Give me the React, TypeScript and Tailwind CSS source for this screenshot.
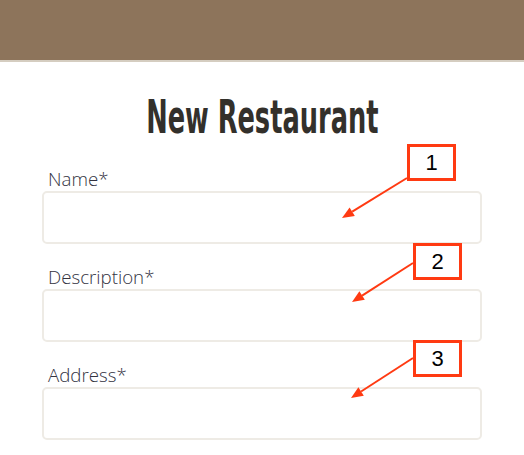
const fields = [
  { label: "Name*", num: "1" },
  { label: "Description*", num: "2" },
  { label: "Address*", num: "3" },
];

// callout boxes + arrows drawn over the form
const callouts = [
  { num: "1", box: "left-[407px] top-[144px]", x1: 407, y1: 178, x2: 342, y2: 218 },
  { num: "2", box: "left-[413px] top-[243px]", x1: 413, y1: 263, x2: 352, y2: 302 },
  { num: "3", box: "left-[413px] top-[340px]", x1: 413, y1: 358, x2: 351, y2: 398 },
];

function Arrow({ x1, y1, x2, y2 }: { x1: number; y1: number; x2: number; y2: number }) {
  const ang = Math.atan2(y2 - y1, x2 - x1);
  const len = 12;
  const w = 5;
  const bx = x2 - len * Math.cos(ang);
  const by = y2 - len * Math.sin(ang);
  const px = -Math.sin(ang) * w;
  const py = Math.cos(ang) * w;
  return (
    <g>
      <line x1={x1} y1={y1} x2={bx} y2={by} stroke="#ff3a12" strokeWidth="2" />
      <polygon points={`${x2},${y2} ${bx + px},${by + py} ${bx - px},${by - py}`} fill="#ff3a12" />
    </g>
  );
}

export default function App() {
  return (
    <div className="relative h-[455px] w-[524px] overflow-hidden bg-white">
      <header className="h-[62px] border-b-2 border-[#d5cdc0] bg-[#8d745b]" />

      <main className="px-[42px]">
        <h1 className="mt-[28px] flex h-[54px] justify-center">
          <span className="inline-block origin-center scale-x-[0.62] whitespace-nowrap text-[46px] leading-[54px] font-bold text-[#33302b] [font-family:'DejaVu_Sans_Condensed','DejaVu_Sans',sans-serif]">
            New Restaurant
          </span>
        </h1>

        <form className="mt-[24px] flex flex-col gap-[22px]">
          {fields.map((f) => (
            <div key={f.num} className="flex flex-col">
              <label className="pl-[6px] text-[18.7px] leading-[22px] font-light text-[#33333f] [font-family:'Open_Sans',sans-serif]">
                {f.label}
              </label>
              <input
                type="text"
                className="mt-px h-[53px] w-full rounded-[5px] border-2 border-[#eeebe5] bg-white outline-none"
              />
            </div>
          ))}
        </form>
      </main>

      <svg className="pointer-events-none absolute left-0 top-0" width="524" height="455">
        {callouts.map((c) => (
          <Arrow key={c.num} x1={c.x1} y1={c.y1} x2={c.x2} y2={c.y2} />
        ))}
      </svg>

      {callouts.map((c) => (
        <div
          key={c.num}
          className={`absolute ${c.box} flex h-[37px] w-[49px] items-center justify-center border-[3px] border-[#ff3a12] bg-white text-[22px] text-black [font-family:'Liberation_Sans',Arial,sans-serif]`}
        >
          {c.num}
        </div>
      ))}
    </div>
  );
}
